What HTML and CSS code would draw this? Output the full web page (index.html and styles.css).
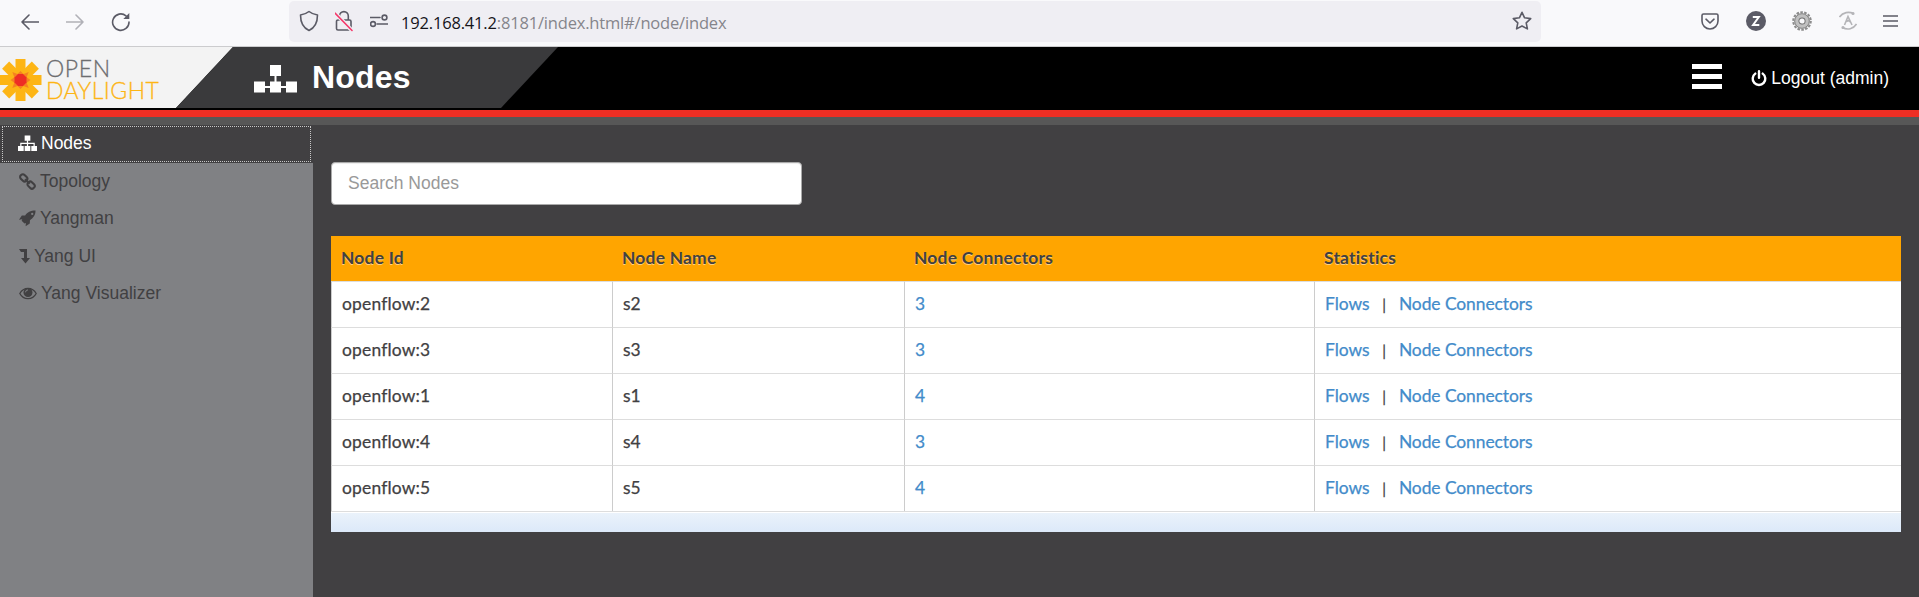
FILE: index.html
```html
<!DOCTYPE html>
<html lang="en">
<head>
<meta charset="utf-8">
<title>OpenDaylight - Nodes</title>
<link rel="stylesheet" href="styles.css">
</head>
<body>
<div class="toolbar">
  <div class="nav">
    <svg width="18" height="16" viewBox="0 0 18 16" class="ln"><path d="M8 1 1 8l7 7M1 8h16.500"/></svg>
    <svg width="18" height="16" viewBox="0 0 18 16" class="ln off"><path d="M10 1l7 7-7 7M17 8H.5"/></svg>
    <svg width="20" height="20" viewBox="0 0 20 20" class="ln"><path d="M18 10a8.200 8.200 0 1 1-3-6.200"/><path d="M18.300 1v6h-6z" fill="#5b5b66" stroke="none"/></svg>
  </div>
  <div class="urlbar">
    <svg class="ln shield" width="20" height="22" viewBox="0 0 20 22"><path d="M10 1.500c2.500 2 5 3 8.500 3.500 0 7-2 12.500-8.500 15.500C3.500 17.500 1.500 12 1.500 5 5 4.500 7.500 3.500 10 1.500z"/></svg>
    <svg class="ln lock" width="18" height="22" viewBox="0 0 18 22"><path d="M4.500 10V6a4.400 4.400 0 0 1 8.800 0v4M3 10h11.500a1.500 1.500 0 0 1 1.500 1.500V19a1 1 0 0 1-1 1H3a1.500 1.500 0 0 1-1.500-1.500v-7A1.500 1.500 0 0 1 3 10z"/><path d="M0 3l17 17.500" stroke="#efeef3" stroke-width="4"/><path d="M0 3l17 17.500" stroke="#f5386a"/></svg>
    <svg class="ln perm" width="18" height="14" viewBox="0 0 18 14"><path d="M0 3.500h10M7 10h11"/><circle cx="14.500" cy="3.500" r="2.400"/><circle cx="3" cy="10" r="2.400"/></svg>
    <span class="url"><b>192.168.41.2</b>:8181/index.html#/node/index</span>
    <svg class="ln star" width="20" height="20" viewBox="0 0 20 20"><path d="M10 1.300l2.600 5.500 6.100.8-4.500 4.200 1.200 6.100L10 15l-5.400 2.900 1.200-6.100L1.300 7.600l6.100-.8z"/></svg>
  </div>
  <div class="tools">
    <svg class="ln" width="18" height="17" viewBox="0 0 18 17"><path d="M2.500 1h13A1.500 1.500 0 0 1 17 2.500V8A8 8 0 0 1 1 8V2.500A1.500 1.500 0 0 1 2.500 1zM5 6.200l4 3.800 4-3.800"/></svg>
    <svg width="20" height="20" viewBox="0 0 20 20"><circle cx="10" cy="10" r="10" fill="#5b5b66"/><path d="M6.800 6h6L7.100 14h6.200" fill="none" stroke="#fff" stroke-width="2"/></svg>
    <svg width="20" height="20" viewBox="0 0 20 20" fill="none"><circle cx="10" cy="10" r="8.700" stroke="#8c8c8c" stroke-width="2.200" stroke-dasharray="2.600 1.300"/><circle cx="10" cy="10" r="5.800" stroke="#c0c0c0" stroke-width="4"/><circle cx="10" cy="10" r="7.300" stroke="#858585"/><circle cx="10" cy="10" r="3.200" stroke="#777" stroke-width="1.200"/></svg>
    <svg width="18" height="20" viewBox="0 0 18 20" fill="none" stroke="#b5b5b8" stroke-width="1.600"><path d="M.5 6C4 1 10 .5 14.500 2.500M17.500 13c-3 5-9 6.500-14 3.500M5.500 14l3.500-8.500L13 14M7.500 10.500l2-1 1.500 1.500"/><circle cx="14" cy="2.500" r=".8"/><circle cx="4" cy="16.500" r=".8"/></svg>
    <svg class="ln" width="15" height="14" viewBox="0 0 15 14"><path d="M0 2h15M0 7h15M0 12h15"/></svg>
  </div>
</div>
<header class="header">
  <div class="brand">
    <svg class="flower" width="42" height="44" viewBox="0 0 42 44">
      <g fill="#fdb515"><path d="M15.500 1h10v42h-10zM0 17h41.500v10H0z"/><path d="M15.500 1h10v42h-10z" transform="rotate(45 20.500 22)"/><path d="M15.500 1h10v42h-10z" transform="rotate(-45 20.500 22)"/></g>
      <path fill="#f58220" d="M20.500 13l3 3 5.200-2-2 5.200 3.800 2.800-3.800 2.800 2 5.200-5.200-2-3 3-3-3-5.200 2 2-5.200-3.800-2.800 3.800-2.800-2-5.200 5.200 2z"/>
      <path fill="#ee2e24" d="M18 16h5l3.500 3.500v5L23 28h-5l-3.500-3.500v-5z"/>
    </svg>
    <div class="wordmark"><span class="w1">OPEN</span><span class="w2">DAYLIGHT</span></div>
  </div>
  <div class="title">
    <svg width="43" height="28" viewBox="0 0 43 28" fill="#fff"><path d="M16 0h11v11H16zM0 16.500h11v11H0zM16 16.500h11v11H16zM32 16.500h11v11H32zM20.500 10h2v7h-2zM10 21h23v2H10z"/></svg>
    <h1>Nodes</h1>
  </div>
  <div class="user">
    <div class="burger"><i></i><i></i><i></i></div>
    <a class="logout"><svg width="16" height="17" viewBox="0 0 16 17" fill="none" stroke="#fff" stroke-width="2.400" stroke-linecap="round"><path d="M8 1.200v6.500M4.300 3.600a6.300 6.300 0 1 0 7.400 0"/></svg><span>Logout (admin)</span></a>
  </div>
</header>
<div class="stripe"></div>
<div class="main">
  <nav class="side">
    <a class="item active"><svg width="19" height="17" viewBox="0 0 20 17" fill="#fff"><path d="M7 0h6v5.500H7zM0 11h6v5.500H0zM7 11h6v5.500H7zM14 11h6v5.500h-6z"/><path d="M3 12V8.300h14V12M10 5v7" fill="none" stroke="#fff" stroke-width="1.300"/></svg><span>Nodes</span></a>
    <a class="item"><svg width="17" height="17" viewBox="0 0 18 18" fill="none" stroke="#414042" stroke-width="2.200"><rect x="1" y="2.300" width="8.200" height="5.600" rx="2.500" transform="rotate(45 5 5)"/><rect x="8.700" y="10" width="8.200" height="5.600" rx="2.500" transform="rotate(45 12.800 12.800)"/><path d="M6.500 6.500l4.800 4.800"/></svg><span>Topology</span></a>
    <a class="item"><svg width="17" height="17" viewBox="0 0 18 17" fill="#414042"><path fill-rule="evenodd" d="M17.500 0C12 0 9 2 6.500 5.200L3 5.400 0 9.700l3.500-.3-.7 1.500 3 3 1.500-.7-.3 3.600 4.400-3 .2-3.500C15 7.800 17.500 5 17.500 0zM14 2.500a1.200 1.200 0 1 1 0 2.400 1.200 1.200 0 0 1 0-2.400z"/></svg><span>Yangman</span></a>
    <a class="item"><svg width="11" height="15" viewBox="0 0 11 15" fill="#414042"><path d="M0 0h8v9h3l-4.500 5.500L2 9h3V3H2z"/></svg><span>Yang UI</span></a>
    <a class="item"><svg width="18" height="13" viewBox="0 0 18 13"><path d="M.8 6.500C4.500-.4 13.500-.4 17.200 6.500 13.500 13.400 4.500 13.400.8 6.500z" fill="none" stroke="#414042" stroke-width="1.300"/><circle cx="9" cy="5.500" r="4.500" fill="#414042"/><path d="M6.500 5.300A2.500 2.500 0 0 1 9 2.900" fill="none" stroke="#808184"/></svg><span>Yang Visualizer</span></a>
  </nav>
  <main class="content">
    <input class="search" type="text" placeholder="Search Nodes">
    <table class="grid">
      <colgroup><col class="c1"><col class="c2"><col class="c3"><col></colgroup>
      <thead><tr><th>Node Id</th><th>Node Name</th><th>Node Connectors</th><th>Statistics</th></tr></thead>
      <tbody>
        <tr><td>openflow:2</td><td>s2</td><td><a>3</a></td><td><a>Flows</a><i>|</i><a>Node Connectors</a></td></tr>
        <tr><td>openflow:3</td><td>s3</td><td><a>3</a></td><td><a>Flows</a><i>|</i><a>Node Connectors</a></td></tr>
        <tr><td>openflow:1</td><td>s1</td><td><a>4</a></td><td><a>Flows</a><i>|</i><a>Node Connectors</a></td></tr>
        <tr><td>openflow:4</td><td>s4</td><td><a>3</a></td><td><a>Flows</a><i>|</i><a>Node Connectors</a></td></tr>
        <tr><td>openflow:5</td><td>s5</td><td><a>4</a></td><td><a>Flows</a><i>|</i><a>Node Connectors</a></td></tr>
      </tbody>
    </table>
    <div class="foot"></div>
  </main>
</div>
</body>
</html>
```
FILE: styles.css
```css
* { box-sizing: border-box; }
body { margin: 0; height: 597px; overflow: hidden; display: flex; flex-direction: column; background: #414042; font-family: "Liberation Sans", Arial, sans-serif; font-size: 17.5px; color: #414042; }
svg { display: block; flex: none; }
.ln { fill: none; stroke: #5b5b66; stroke-width: 1.6; stroke-linecap: round; stroke-linejoin: round; }
.off { opacity: .45; }
.toolbar { flex: none; height: 47px; display: flex; background: #f9f9fb; border-bottom: 1px solid #ccccce; }
.nav { width: 289px; display: flex; align-items: center; padding: 0 0 3px 21px; gap: 27px; }
.urlbar { width: 1252px; height: 41px; margin-top: 1px; display: flex; align-items: center; padding: 0 9px 1px 10px; background: #efeef3; border-radius: 5px; }
.lock { margin-left: 16px; }
.perm { margin-left: 17px; }
.url { flex: 1; margin-left: 13px; padding-top: 3px; font-family: "Open Sans", sans-serif; font-size: 16.5px; letter-spacing: -.18px; color: #85858b; white-space: nowrap; }
.url b { font-weight: 400; color: #15141a; }
.tools { flex: 1; display: flex; align-items: center; justify-content: space-between; padding: 0 21px 4px 160px; }
.header { flex: none; height: 63px; display: flex; background: #000; }
.brand { width: 233px; height: 61px; display: flex; background: #f3f3f3; clip-path: polygon(0 0, 100% 0, 176px 100%, 0 100%); }
.flower { margin-top: 11px; }
.wordmark { display: flex; flex-direction: column; margin-left: 4px; padding-top: 10px; font-family: Lato, sans-serif; font-weight: 300; font-size: 23px; line-height: 22px; -webkit-text-stroke: .3px currentColor; }
.w1 { color: #6d6e70; letter-spacing: .6px; }
.w2 { color: #fdb515; letter-spacing: .45px; }
.title { width: 382px; height: 61px; margin-left: -57px; display: flex; align-items: flex-start; padding: 18px 0 0 78px; gap: 15px; background: #3a3a3c; clip-path: polygon(57px 0, 100% 0, 325px 100%, 0 100%); }
h1 { margin: -4px 0 0; color: #fff; font-size: 32px; line-height: 32px; letter-spacing: .2px; }
.user { flex: 1; display: flex; justify-content: flex-end; align-items: flex-start; padding: 17px 30px 0 0; color: #fff; }
.burger { display: flex; flex-direction: column; gap: 5px; margin-right: 29px; }
.burger i { width: 30px; height: 5px; background: #fff; }
.logout { display: flex; align-items: center; gap: 4px; margin-top: 4px; }
.stripe { flex: none; height: 15px; background: #575757; border-top: 7px solid #ee2e24; }
.main { flex: 1; display: flex; }
.side { width: 313px; display: flex; flex-direction: column; background: #808184; }
.item { height: 37.5px; display: flex; align-items: center; gap: 4px; padding-left: 19px; }
.active { position: relative; padding-left: 18px; color: #fff; background: #414042; }
.active::after { content: ""; position: absolute; inset: 1px 2px 1px 2px; border: 1px dotted #c8c8c8; }
.content { flex: 1; padding: 37px 18px 0; }
.search { display: block; width: 471px; height: 43px; padding: 0 15px 0 16px; border: 1px solid #aaa; border-radius: 4px; background: #fff; box-shadow: inset 0 1px 1px rgba(0,0,0,.075); font: 17.5px "Liberation Sans", Arial, sans-serif; }
.search::placeholder { color: #999; opacity: 1; }
.grid { width: 1570px; margin-top: 31px; table-layout: fixed; border-collapse: separate; border-spacing: 0; background: #fff; font-family: "Trebuchet MS", Lato, sans-serif; font-size: 17.4px; }
.c1 { width: 281px; } .c2 { width: 292px; } .c3 { width: 410px; }
th { height: 45px; padding: 0 10px 2px; background: #ffa500; text-align: left; letter-spacing: .23px; text-shadow: 0 1px 0 rgba(255,255,255,.5); }
td { height: 46px; padding: 0 10px 2px; border-top: 1px solid #ddd; border-left: 1px solid #ccc; color: #414042; -webkit-text-stroke: .25px currentColor; }
td:first-child { letter-spacing: .2px; }
td a { color: #428bca; }
td a:last-child { letter-spacing: -.05px; }
td i { font-style: normal; font-size: 15px; margin: 0 13px 0 12.500px; }
.foot { height: 21px; border-top: 1px solid #ddd; background: linear-gradient(#ebf3fb, #dce9f9); box-shadow: inset 0 1px #fff; width: 1570px; }
```
